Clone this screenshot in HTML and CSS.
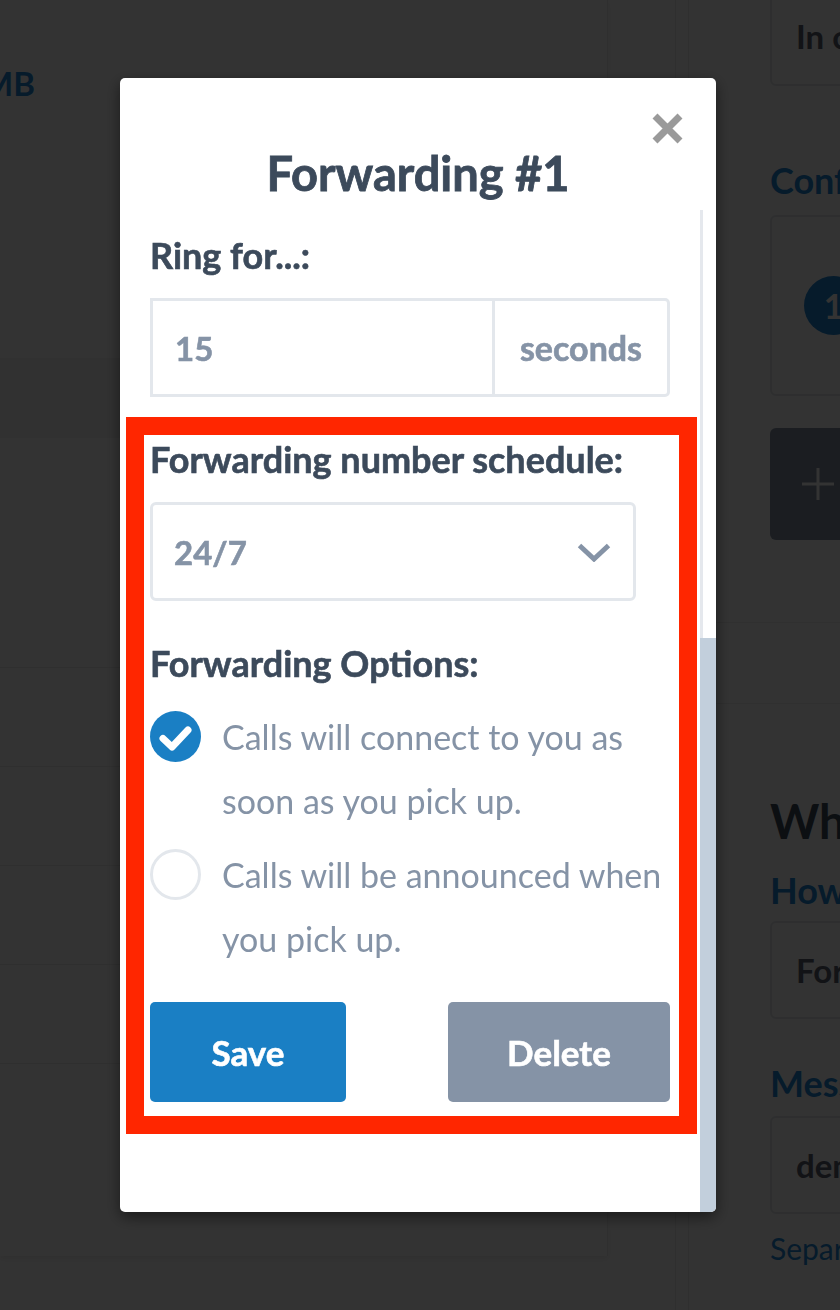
FILE: index.html
```html
<!DOCTYPE html>
<html>
<head>
  <meta charset="utf-8">
  <title>Forwarding #1</title>
  <link rel="stylesheet" href="styles.css">
</head>
<body>
  <div class="page">
    <div class="left-panel">
      <div class="usage">Storage used: 24 MB</div>
      <div class="band"></div>
      <div class="list-spacer"></div>
      <div class="row"></div>
      <div class="row"></div>
      <div class="row"></div>
      <div class="row"></div>
      <div class="row"></div>
    </div>
    <div class="gutter"></div>
    <div class="right-panel">
      <div class="field-box box-top">In call</div>
      <h3 class="section-title title-conf">Conference</h3>
      <div class="field-box steps"><span class="step">1</span></div>
      <div class="add-btn">
        <svg width="36" height="36" viewBox="0 0 36 36"><path d="M18 2v32M2 18h32" stroke="#fff" stroke-width="3" fill="none"/></svg>
      </div>
      <div class="divider"></div>
      <h2 class="big-title">When the call comes in</h2>
      <h3 class="section-title title-how">How</h3>
      <div class="field-box box-how">Forward</div>
      <h3 class="section-title title-msg">Message</h3>
      <div class="field-box box-msg">demo</div>
      <p class="help">Separate</p>
    </div>
  </div>

  <div class="overlay">
    <div class="modal">
      <div class="modal-header">
        <button class="close-btn" type="button" aria-label="Close">
          <svg width="31" height="31" viewBox="0 0 31 31">
            <path d="M3 3L28 28M28 3L3 28" stroke="#9a9a9a" stroke-width="7" fill="none"/>
          </svg>
        </button>
        <h1 class="modal-title">Forwarding #1</h1>
      </div>

      <div class="modal-body">
        <div class="modal-content">
          <label class="field-label" for="ring">Ring for...:</label>
          <div class="input-group">
            <input id="ring" class="input-field" type="text" value="15">
            <span class="addon">seconds</span>
          </div>

          <div class="highlight">
            <label class="field-label">Forwarding number schedule:</label>
            <div class="select-box">
              <span>24/7</span>
              <svg width="34" height="19" viewBox="0 0 34 19">
                <path d="M2.5 2.5L17 16L31.5 2.5" stroke="#8593a6" stroke-width="5" fill="none"/>
              </svg>
            </div>

            <label class="field-label label-options">Forwarding Options:</label>
            <div class="radio-option option-first">
              <svg class="radio-mark" width="51" height="51" viewBox="0 0 51 51">
                <circle cx="25.5" cy="25.5" r="25.5" fill="#1a7fc4"/>
                <path d="M13 27.5L22 36L38 19" stroke="#fff" stroke-width="7" stroke-linecap="round" stroke-linejoin="round" fill="none"/>
              </svg>
              <span class="radio-text">Calls will connect to you as soon as you pick up.</span>
            </div>
            <div class="radio-option">
              <svg class="radio-mark" width="51" height="51" viewBox="0 0 51 51">
                <circle cx="25.5" cy="25.5" r="24" fill="#fff" stroke="#e3e7ec" stroke-width="3"/>
              </svg>
              <span class="radio-text">Calls will be announced when you pick up.</span>
            </div>

            <div class="actions">
              <button class="btn btn-save" type="button">Save</button>
              <button class="btn btn-delete" type="button">Delete</button>
            </div>
          </div>
        </div>
        <div class="scrollbar"><div class="scroll-thumb"></div></div>
      </div>
    </div>
  </div>
</body>
</html>
```

FILE: styles.css
```css
body {
  margin: 0;
  font-family: Lato, "Open Sans", sans-serif;
  background-color: #fff;
  overflow: hidden;
  height: 1310px;
}

/* page behind the dialog */
.page {
  display: flex;
  height: 1310px;
}

.left-panel {
  width: 607px;
  height: 1256px;
  flex-shrink: 0;
  border-right: 1px solid #ebebeb;
  box-shadow: 0 3px 6px rgba(0, 0, 0, 0.08);
  overflow: hidden;
}

.usage {
  margin: 62px 0 0 -300px;
  width: 335px;
  text-align: right;
  white-space: nowrap;
  font-size: 33px;
  font-weight: 700;
  line-height: 42px;
  color: #1f86d6;
}

.band {
  margin-top: 254px;
  height: 80px;
  background-color: #f3f3f3;
}

.list-spacer {
  height: 229px;
}

.row {
  height: 98px;
  border-top: 1px solid #ececec;
}

.gutter {
  width: 67px;
  flex-shrink: 0;
  border-right: 1px solid #ececec;
}

.right-panel {
  margin-left: 12px;
  border-left: 1px solid #ececec;
  padding-left: 81px;
  width: 600px;
  flex-shrink: 0;
}

.field-box {
  display: flex;
  align-items: center;
  box-sizing: border-box;
  border: 2px solid #e3e7ec;
  border-radius: 6px;
  padding-left: 24px;
  font-size: 33px;
  font-weight: 700;
  color: #5a6070;
}

.box-top {
  margin-top: -15px;
  height: 101px;
}

.section-title {
  margin: 0;
  font-size: 36px;
  font-weight: 700;
  line-height: 42px;
  color: #1f86d6;
}

.title-conf {
  margin: 73px 0 14px;
}

.steps {
  height: 181px;
  padding-left: 32px;
}

.step {
  width: 59px;
  height: 59px;
  border-radius: 50%;
  background-color: #1f86d6;
  color: #fff;
  display: flex;
  align-items: center;
  justify-content: center;
  font-size: 34px;
}

.add-btn {
  margin-top: 32px;
  height: 112px;
  border-radius: 6px;
  background-color: #8593a6;
  display: flex;
  align-items: center;
  padding-left: 30px;
}

.divider {
  margin: 82px 0 0 -200px;
  height: 80px;
  border-top: 1px solid #eeeeee;
  border-bottom: 1px solid #eeeeee;
}

.big-title {
  margin: 89px 0 0;
  font-size: 47px;
  font-weight: 700;
  line-height: 56px;
  color: #3c4a5b;
  white-space: nowrap;
}

.title-how {
  margin: 20px 0 10px;
}

.box-how,
.box-msg {
  height: 98px;
}

.title-msg {
  margin: 43px 0 12px;
}

.help {
  margin: 16px 0 0;
  font-size: 30px;
  line-height: 36px;
  color: #1f86d6;
}

/* dialog */
.overlay {
  position: fixed;
  top: 0;
  left: 0;
  right: 0;
  bottom: 0;
  background-color: rgba(0, 0, 0, 0.8);
  display: flex;
  align-items: flex-start;
  padding: 78px 0 0 120px;
}

.modal {
  width: 596px;
  height: 1134px;
  background-color: #fff;
  border-radius: 5px;
  box-shadow: 0 5px 15px rgba(0, 0, 0, 0.5);
  display: flex;
  flex-direction: column;
  overflow: hidden;
}

.modal-header {
  position: relative;
  height: 132px;
  box-sizing: border-box;
  padding-top: 67px;
  text-align: center;
  flex-shrink: 0;
}

.close-btn {
  position: absolute;
  top: 35px;
  right: 33px;
  width: 31px;
  height: 31px;
  padding: 0;
  border: none;
  background: none;
  cursor: pointer;
}

.close-btn svg {
  display: block;
}

.modal-title {
  margin: 0;
  font-size: 47px;
  font-weight: 700;
  line-height: 56px;
  color: #3c4a5b;
  -webkit-text-stroke: 0.8px #3c4a5b;
}

.modal-body {
  flex: 1;
  display: flex;
  min-height: 0;
}

.modal-content {
  flex: 1;
  padding: 24px 30px 0;
  overflow: hidden;
}

.scrollbar {
  width: 16px;
  box-shadow: inset 3px 0 0 #e5e8ed;
  display: flex;
  flex-direction: column;
  justify-content: flex-end;
}

.scroll-thumb {
  height: 574px;
  background-color: #c2cfdc;
}

.field-label {
  display: block;
  font-size: 36px;
  font-weight: 700;
  line-height: 42px;
  color: #3c4a5b;
  -webkit-text-stroke: 0.6px #3c4a5b;
  margin-bottom: 22px;
}

.input-group {
  display: flex;
  height: 99px;
  box-sizing: border-box;
  border: 3px solid #e3e7ec;
  border-radius: 0 5px 5px 0;
}

.input-field {
  flex: 1;
  min-width: 0;
  border: none;
  outline: none;
  padding: 0 0 0 22px;
  background: transparent;
  font-family: inherit;
  font-size: 33px;
  font-weight: 700;
  color: #8593a6;
  -webkit-text-stroke: 0.6px #8593a6;
}

.addon {
  width: 172px;
  border-left: 3px solid #e3e7ec;
  display: flex;
  align-items: center;
  justify-content: center;
  font-size: 34px;
  font-weight: 700;
  color: #8593a6;
  -webkit-text-stroke: 0.6px #8593a6;
}

/* annotation frame around the schedule section */
.highlight {
  margin: 20px -27px 0 -24px;
  border: 18px solid #ff2600;
  padding: 3px 9px 14px 6px;
}

.select-box {
  width: 486px;
  height: 99px;
  box-sizing: border-box;
  border: 3px solid #e3e7ec;
  border-radius: 6px;
  display: flex;
  align-items: center;
  justify-content: space-between;
  padding: 0 22px 0 21px;
  margin-bottom: 41px;
  font-size: 33px;
  font-weight: 700;
  color: #8593a6;
  -webkit-text-stroke: 0.6px #8593a6;
}

.select-box svg {
  margin-top: 2px;
}

.label-options {
  margin-bottom: 21px;
}

.radio-option {
  display: flex;
  align-items: flex-start;
  gap: 21px;
  margin-bottom: 31px;
}

.option-first {
  margin-bottom: 10px;
}

.radio-mark {
  flex-shrink: 0;
  margin-top: 6px;
}

.radio-text {
  font-size: 34px;
  line-height: 64px;
  color: #8593a6;
}

.actions {
  display: flex;
  justify-content: space-between;
}

.btn {
  height: 100px;
  border: none;
  border-radius: 5px;
  font-family: inherit;
  font-size: 35px;
  font-weight: 700;
  color: #fff;
  -webkit-text-stroke: 0.6px #fff;
  cursor: pointer;
}

.btn-save {
  width: 196px;
  background-color: #1a7fc4;
}

.btn-delete {
  width: 222px;
  background-color: #8593a6;
}
```
